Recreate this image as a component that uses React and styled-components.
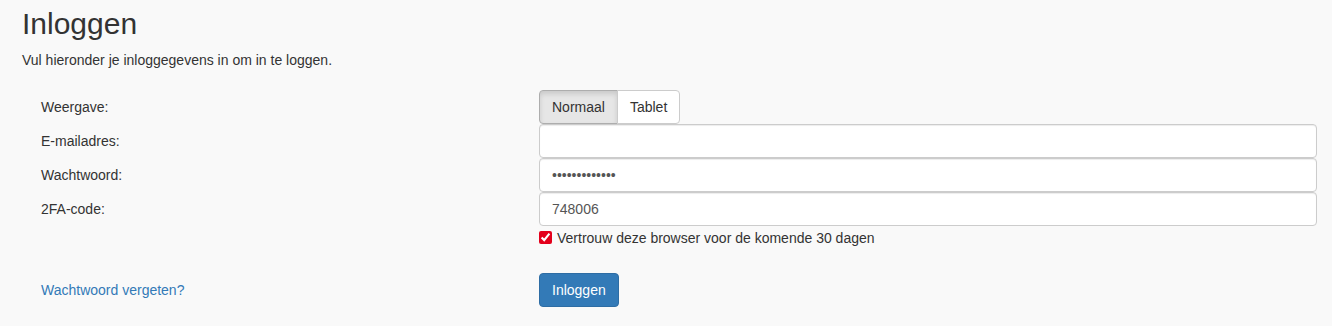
import React from "react";
import styled, { createGlobalStyle } from "styled-components";

const GlobalStyle = createGlobalStyle`
	body {
		margin: 0;
		background: #f9f9f9;
		font-family: "Liberation Sans", Arial, sans-serif;
		font-size: 14px;
		color: #333;
	}
`;

const Page = styled.div`
	padding: 0 15px 0 22px;
`;
const Title = styled.h1`
	margin: 0;
	padding-top: 6px;
	font-size: 30px;
	font-weight: 400;
	line-height: 36px;
	color: #333;
`;
const Intro = styled.p`
	margin: 8px 0 0;
	line-height: 20px;
`;
const Form = styled.form`
	display: grid;
	grid-template-columns: 517px 1fr;
	margin-top: 20px;
`;
const Label = styled.label`
	display: flex;
	align-items: center;
	height: 34px;
	padding-left: 19px;
`;
const Field = styled.div`
	display: flex;
	align-items: center;
	min-height: ${(p) => (p.$tall ? 34 : 20)}px;
`;
const Group = styled.div`
	display: flex;
`;
const ToggleButton = styled.button`
	height: 34px;
	padding: 0 12px;
	font: inherit;
	color: #333;
	background: ${(p) => (p.$active ? "#e6e6e6" : "#fff")};
	border: 1px solid ${(p) => (p.$active ? "#adadad" : "#ccc")};
	box-shadow: ${(p) => (p.$active ? "inset 0 3px 5px rgba(0,0,0,.125)" : "none")};
	border-radius: ${(p) => (p.$first ? "4px 0 0 4px" : "0 4px 4px 0")};
	margin-left: ${(p) => (p.$first ? 0 : -1)}px;
`;
const Input = styled.input`
	box-sizing: border-box;
	width: 100%;
	height: 34px;
	padding: 0 12px;
	font: inherit;
	color: #555;
	background: #fff;
	border: 1px solid #ccc;
	border-radius: 4px;
	box-shadow: inset 0 1px 1px rgba(0,0,0,.075);
	outline: none;
`;
const Check = styled.label`
	display: flex;
	align-items: center;
	gap: 5px;
	margin-top: 3px;
	input {
		margin: 0;
		width: 13px;
		height: 13px;
		accent-color: #e3001b;
	}
`;
const Link = styled.a`
	color: #337ab7;
	text-decoration: none;
`;
const Primary = styled.button`
	height: 34px;
	padding: 0 12px;
	font: inherit;
	color: #fff;
	background: #337ab7;
	border: 1px solid #2e6da4;
	border-radius: 4px;
`;
const Spacer = styled.div`
	height: 27px;
	grid-column: 1 / -1;
`;

export default function App() {
	return (
		<>
			<GlobalStyle />
			<Page>
				<Title>Inloggen</Title>
				<Intro>Vul hieronder je inloggegevens in om in te loggen.</Intro>
				<Form onSubmit={(e) => e.preventDefault()}>
					<Label>Weergave:</Label>
					<Field $tall>
						<Group>
							<ToggleButton type="button" $first $active>Normaal</ToggleButton>
							<ToggleButton type="button">Tablet</ToggleButton>
						</Group>
					</Field>
					<Label>E-mailadres:</Label>
					<Field $tall><Input type="email" /></Field>
					<Label>Wachtwoord:</Label>
					<Field $tall><Input type="password" defaultValue="geheimwachtwo" /></Field>
					<Label>2FA-code:</Label>
					<Field $tall><Input type="text" defaultValue="748006" /></Field>
					<div />
					<Field>
						<Check>
							<input type="checkbox" defaultChecked />
							Vertrouw deze browser voor de komende 30 dagen
						</Check>
					</Field>
					<Spacer />
					<Label><Link href="#">Wachtwoord vergeten?</Link></Label>
					<Field $tall><Primary type="submit">Inloggen</Primary></Field>
				</Form>
			</Page>
		</>
	);
}
